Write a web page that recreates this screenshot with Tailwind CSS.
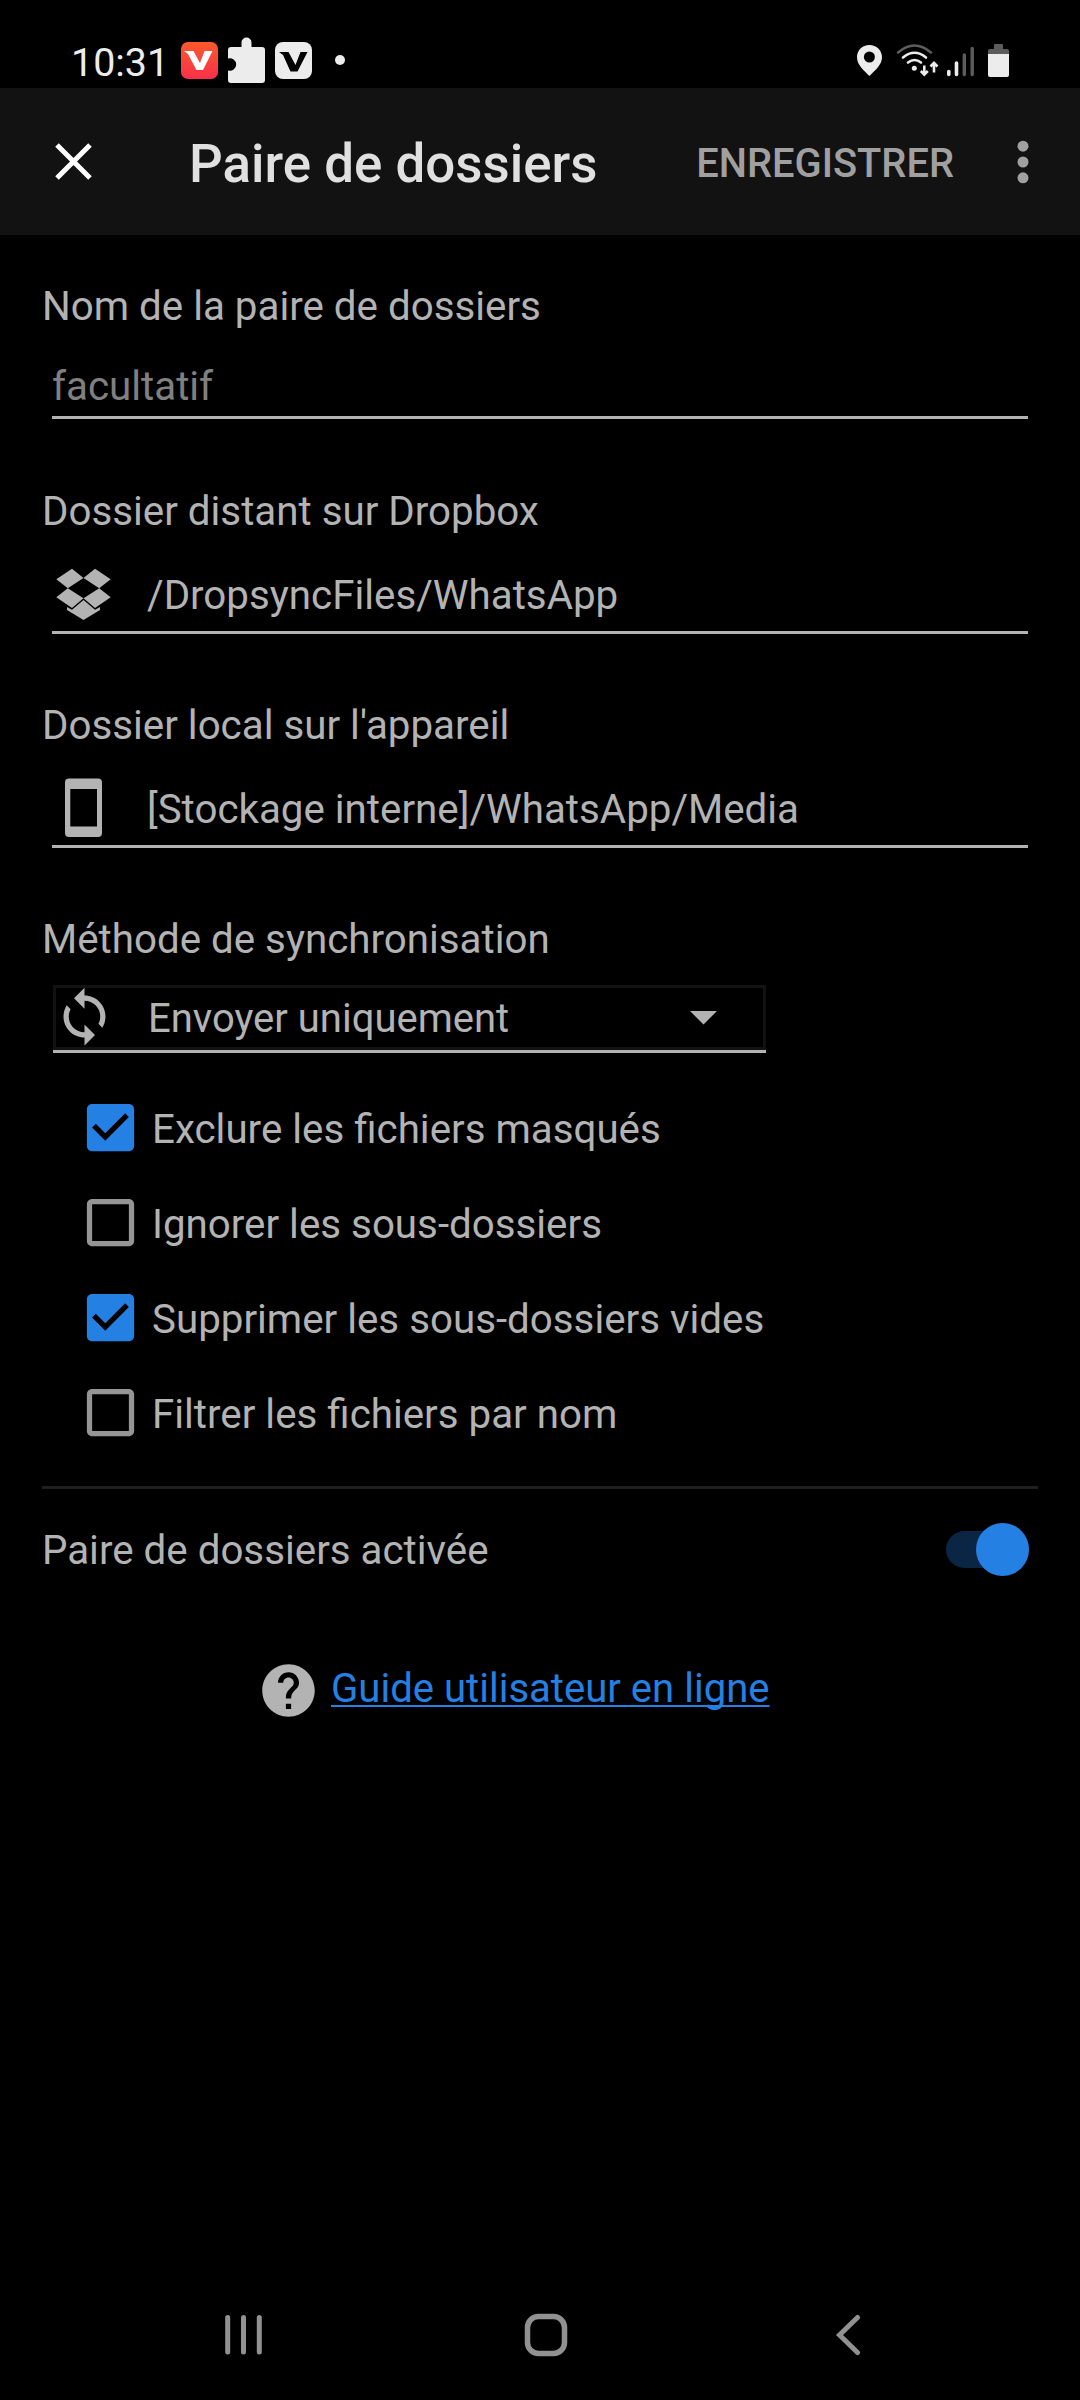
<!DOCTYPE html>
<html lang="fr">
<head>
<meta charset="utf-8">
<title>Paire de dossiers</title>
<script src="https://cdn.jsdelivr.net/npm/@tailwindcss/browser@4"></script>
</head>
<body class="bg-black">
<div class="flex h-[2400px] w-[1080px] flex-col overflow-hidden bg-black font-[Roboto,sans-serif] text-[40.3px] leading-[48px] text-[#b3b3b3]">

  <!-- Status bar -->
  <div class="flex h-[88px] shrink-0 justify-between pl-[71px] pr-[70px]">
    <div class="flex">
      <span class="mt-[39px] w-[110px] whitespace-nowrap text-[39.4px] text-[#ececec]">10:31</span>
      <svg class="mt-9" width="170" height="50" viewBox="181 36 170 50">
        <defs><linearGradient id="vg" x1="0" y1="0" x2="0" y2="1"><stop offset="0" stop-color="#fb5a2c"/><stop offset="1" stop-color="#f9304a"/></linearGradient></defs>
        <rect x="181" y="42" width="37" height="37" rx="7" fill="url(#vg)"/>
        <path d="M184 51H193.500L200 63L204.500 51H212.500L203 70H196.500L188 54Z" fill="#fff"/>
        <path d="M231 47H241.500V42.500A4.800 4.800 0 0 1 251.500 42.500V47H262A3 3 0 0 1 265 50V80A3 3 0 0 1 262 83H231A3 3 0 0 1 228 80V70.500A6.300 6.300 0 1 0 228 58.500V50A3 3 0 0 1 231 47Z" fill="#ececec"/>
        <rect x="275" y="42" width="37" height="37" rx="8" fill="#ececec"/>
        <path d="M279 52H288.500L295.500 65L300.500 52H307.500L297.500 71.500H290.500L283 55Z" fill="#000"/>
        <circle cx="340" cy="60" r="5" fill="#ececec"/>
      </svg>
    </div>
    <svg class="mt-9" width="154" height="50" viewBox="856 36 154 50" fill="none">
      <path d="M869.400 45C862.300 45 857 50.300 857 57.300C857 65 864 70.500 869.400 76C874.800 70.500 882 65 882 57.300C882 50.300 876.500 45 869.400 45Z" fill="#ececec"/>
      <circle cx="869.400" cy="57" r="5.500" fill="#000"/>
      <g stroke-width="2.600" stroke-linecap="round">
        <path d="M898 52.500Q914.500 38.500 931 52.500" stroke="#5c5c5c"/>
        <path d="M903 57.500Q914.500 48 926 57.500" stroke="#ececec"/>
        <path d="M908 62.500Q914.500 57.500 921 62.500" stroke="#ececec"/>
      </g>
      <circle cx="914.300" cy="68.200" r="2.500" fill="#ececec"/>
      <path d="M924.300 65.500V74.500M920.800 71L924.300 74.700L927.800 71M934 72.500V63M930.500 66.500L934 62.800L937.500 66.500" stroke="#ececec" stroke-width="2.600"/>
      <path d="M948.800 71.500V74.500M956.500 63V74.500" stroke="#ececec" stroke-width="3.600" stroke-linecap="round"/>
      <path d="M964.300 55V74.500M972.200 48.500V74.500" stroke="#5c5c5c" stroke-width="3.400" stroke-linecap="round"/>
      <path d="M994 45Q994 44 995 44H1002Q1003 44 1003 45V49H1007Q1009 49 1009 51V54H988V51Q988 49 990 49H994Z" fill="#5c5c5c"/>
      <path d="M988 54H1009V75Q1009 77 1007 77H990Q988 77 988 75Z" fill="#ececec"/>
    </svg>
  </div>

  <!-- App bar -->
  <div class="flex h-[147px] shrink-0 items-center bg-[#121212] pl-[55px] pr-[51px]">
    <svg width="37" height="37" viewBox="0 0 37 37"><path d="M2 2L35 35M35 2L2 35" stroke="#fff" stroke-width="5"/></svg>
    <h1 class="ml-[97px] mt-[5px] whitespace-nowrap text-[52.900px] font-medium leading-[60px] text-[#e0e0e0]">Paire de dossiers</h1>
    <button class="ml-auto mt-[5px] whitespace-nowrap text-[39.850px] font-medium text-[#a0a0a0]">ENREGISTRER</button>
    <svg class="ml-[63px]" width="12" height="44" viewBox="0 0 12 44" fill="#a0a0a0"><circle cx="6" cy="6.200" r="5.500"/><circle cx="6" cy="22" r="5.500"/><circle cx="6" cy="37.800" r="5.500"/></svg>
  </div>

  <!-- Form -->
  <main class="flex grow flex-col px-[42px] pt-[48px]">
    <label class="whitespace-nowrap">Nom de la paire de dossiers</label>
    <div class="mx-[10px] mt-[31px] h-[57px] border-b-[3px] border-[#b3b3b3] pt-px text-[#808080]">facultatif</div>

    <label class="mt-[69px] whitespace-nowrap">Dossier distant sur Dropbox</label>
    <div class="mx-[10px] mt-[29px] flex h-[69px] border-b-[3px] border-[#b3b3b3]">
      <svg class="mt-px" width="63" height="60" viewBox="52 566 63 60" fill="#b3b3b3">
        <path d="M72 568.700L83.500 578L67.800 588.300L56.300 579.300ZM95 568.700L83.500 578L99.200 588.300L110.700 579.300ZM67.800 588.300L83.500 598.300L72 608L56.300 597.300ZM99.200 588.300L83.500 598.300L95 608L110.700 597.300ZM83.500 600L95 609.800L100 607V610L83.500 620L67 610V607L72 609.800Z"/>
      </svg>
      <span class="ml-8 mt-[7px] whitespace-nowrap">/DropsyncFiles/WhatsApp</span>
    </div>

    <label class="mt-[68px] whitespace-nowrap">Dossier local sur l'appareil</label>
    <div class="mx-[10px] mt-[26px] flex h-[72px] border-b-[3px] border-[#b3b3b3]">
      <svg width="63" height="63" viewBox="52 775.500 63 63" fill="#b3b3b3" fill-rule="evenodd">
        <path d="M69 778H98Q102 778 102 782V832.500Q102 836.500 98 836.500H69Q65 836.500 65 832.500V782Q65 778 69 778ZM70.300 788.600V826H97V788.600Z"/>
      </svg>
      <span class="ml-8 mt-[10px] whitespace-nowrap">[Stockage interne]/WhatsApp/Media</span>
    </div>

    <label class="mt-[68px] whitespace-nowrap">Méthode de synchronisation</label>
    <div class="ml-[11px] mt-[21px] h-[68px] w-[713px] border-b-[3px] border-[#b3b3b3]">
      <div class="flex h-[65px] items-start border-[3px] border-[#121212]">
        <svg class="-ml-[3px] -mt-[3px] shrink-0" width="63" height="63" viewBox="0 0 24 24" fill="#b3b3b3"><path d="M12 4V1L8 5l4 4V6c3.310 0 6 2.690 6 6 0 1.010-.25 1.970-.7 2.800l1.460 1.460C19.540 15.030 20 13.570 20 12c0-4.420-3.580-8-8-8zm0 14c-3.310 0-6-2.690-6-6 0-1.010.25-1.970.7-2.800L5.240 7.740C4.460 8.970 4 10.430 4 12c0 4.420 3.580 8 8 8v3l4-4-4-4v3z"/></svg>
        <span class="ml-8 mt-[7px] whitespace-nowrap text-[40px]">Envoyer uniquement</span>
        <svg class="ml-auto mr-[46px] mt-[23px]" width="27" height="14" viewBox="0 0 27 14" fill="#b3b3b3"><path d="M0 0H27L13.500 13.500Z"/></svg>
      </div>
    </div>

    <div class="ml-[37px] mt-[27px] flex flex-col">
      <div class="flex h-[95px] items-center">
        <svg width="63" height="63" viewBox="0 0 24 24" fill="#2480e3"><path d="M19 3H5c-1.110 0-2 .9-2 2v14c0 1.100.89 2 2 2h14c1.110 0 2-.9 2-2V5c0-1.100-.89-2-2-2zm-9 14l-5-5 1.410-1.410L10 14.170l7.590-7.590L19 8l-9 9z"/></svg>
        <span class="ml-[10px] mt-1 whitespace-nowrap">Exclure les fichiers masqués</span>
      </div>
      <div class="flex h-[95px] items-center">
        <svg width="63" height="63" viewBox="0 0 24 24" fill="#959595"><path d="M19 5v14H5V5h14m0-2H5c-1.100 0-2 .9-2 2v14c0 1.100.9 2 2 2h14c1.100 0 2-.9 2-2V5c0-1.100-.9-2-2-2z"/></svg>
        <span class="ml-[10px] mt-1 whitespace-nowrap">Ignorer les sous-dossiers</span>
      </div>
      <div class="flex h-[95px] items-center">
        <svg width="63" height="63" viewBox="0 0 24 24" fill="#2480e3"><path d="M19 3H5c-1.110 0-2 .9-2 2v14c0 1.100.89 2 2 2h14c1.110 0 2-.9 2-2V5c0-1.100-.89-2-2-2zm-9 14l-5-5 1.410-1.410L10 14.170l7.590-7.590L19 8l-9 9z"/></svg>
        <span class="ml-[10px] mt-1 whitespace-nowrap">Supprimer les sous-dossiers vides</span>
      </div>
      <div class="flex h-[95px] items-center">
        <svg width="63" height="63" viewBox="0 0 24 24" fill="#959595"><path d="M19 5v14H5V5h14m0-2H5c-1.100 0-2 .9-2 2v14c0 1.100.9 2 2 2h14c1.100 0 2-.9 2-2V5c0-1.100-.9-2-2-2z"/></svg>
        <span class="ml-[10px] mt-1 whitespace-nowrap">Filtrer les fichiers par nom</span>
      </div>
    </div>

    <div class="mt-[26px] h-[3px] shrink-0 bg-[#1f1f1f]"></div>

    <div class="mt-[34px] flex h-[53px] items-center justify-between pr-[9px]">
      <span class="mt-[2px] whitespace-nowrap">Paire de dossiers activée</span>
      <div class="flex h-[37px] w-[83px] items-center justify-end rounded-full bg-[#0b2644]">
        <div class="size-[53px] shrink-0 rounded-full bg-[#2480e3]"></div>
      </div>
    </div>

    <div class="ml-[215px] mt-[83px] flex">
      <svg width="63" height="63" viewBox="0 0 24 24" fill="#b3b3b3"><path d="M12 2C6.480 2 2 6.480 2 12s4.480 10 10 10 10-4.480 10-10S17.520 2 12 2zm1 17h-2v-2h2v2zm2.070-7.750l-.9.920C13.450 12.900 13 13.500 13 15h-2v-.5c0-1.100.45-2.100 1.170-2.830l1.240-1.260c.37-.36.590-.86.590-1.410 0-1.100-.9-2-2-2s-2 .9-2 2H8c0-2.210 1.790-4 4-4s4 1.790 4 4c0 .88-.36 1.680-.93 2.250z"/></svg>
      <a class="ml-[11px] mt-[6px] whitespace-nowrap text-[40.1px] text-[#2480e3] underline decoration-[2px] underline-offset-[3px] [text-decoration-skip-ink:none]">Guide utilisateur en ligne</a>
    </div>
  </main>

  <!-- Navigation bar -->
  <nav class="flex h-[131px] shrink-0 items-center pl-[225px]">
    <svg width="38" height="42" viewBox="0 0 38 42" stroke="#919191" stroke-width="5" stroke-linecap="round"><path d="M2.700 3.500V38M18.500 3.500V38M34.300 3.500V38"/></svg>
    <svg class="ml-[261px]" width="44" height="44" viewBox="0 0 44 44" fill="none" stroke="#919191" stroke-width="5.500"><rect x="3.500" y="3.500" width="37" height="37" rx="11"/></svg>
    <svg class="ml-[267px]" width="27" height="42" viewBox="0 0 27 42" fill="none" stroke="#919191" stroke-width="5" stroke-linecap="round"><path d="M22.500 3.500L4.500 21L22.500 38.500"/></svg>
  </nav>
</div>
</body>
</html>
